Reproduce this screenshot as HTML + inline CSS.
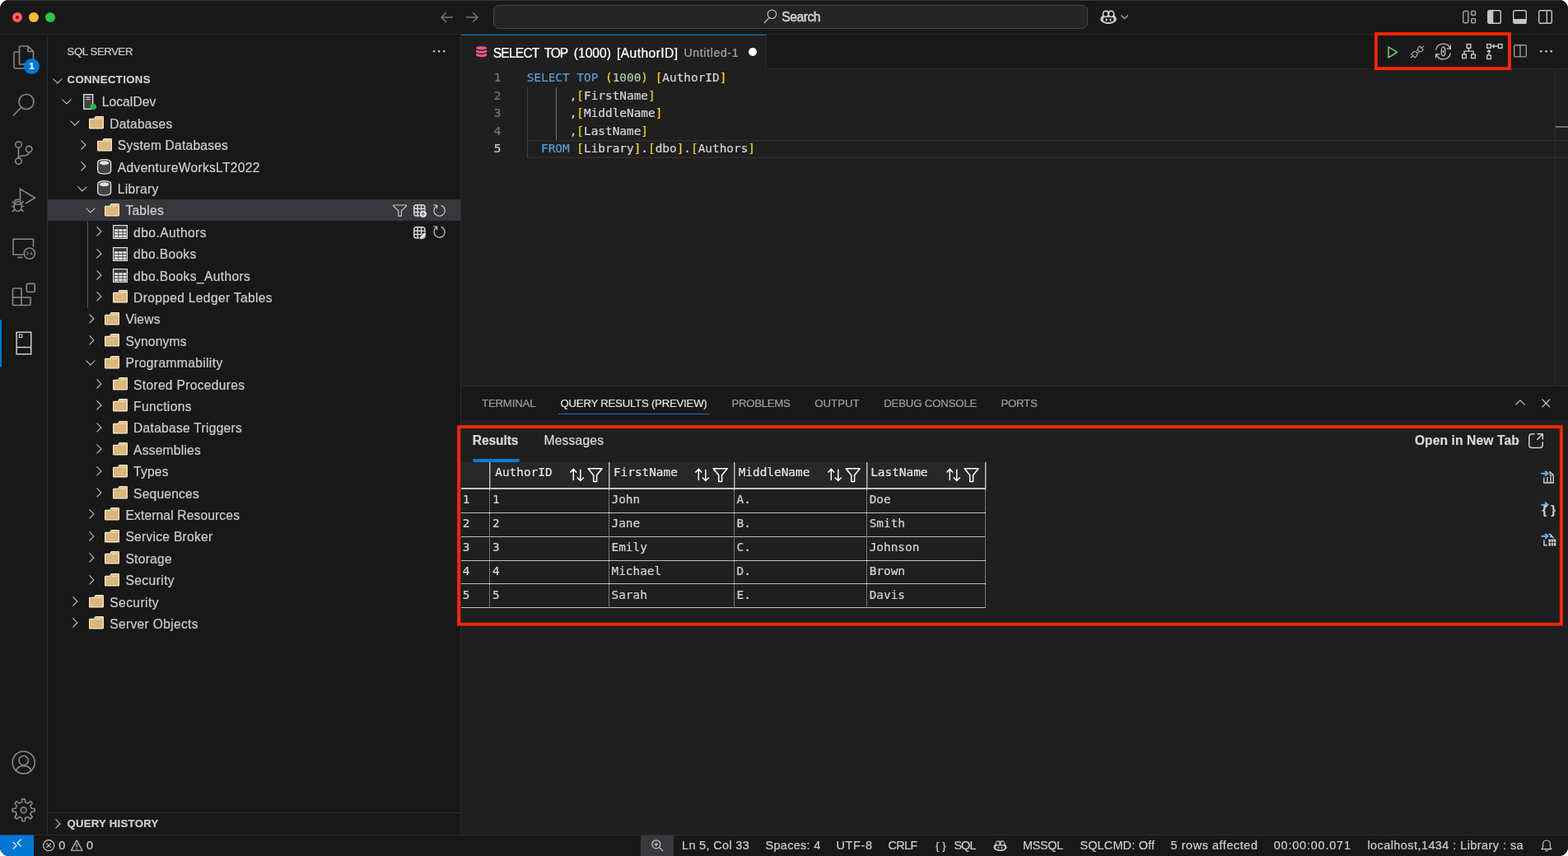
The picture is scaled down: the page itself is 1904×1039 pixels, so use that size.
<!DOCTYPE html>
<html lang="en">
<head>
<meta charset="utf-8">
<title>SQL Server - Visual Studio Code</title>
<style>
*{box-sizing:border-box;margin:0;padding:0}
html,body{width:1904px;height:1039px;overflow:hidden;background:#fff}
body{font-family:"Liberation Sans",sans-serif;color:#ccc;font-size:15.6px}
#win{position:absolute;left:0;top:0;width:1904px;height:1039px;background:#181818;border-radius:11px;overflow:hidden;will-change:transform}
.a{position:absolute}
svg{position:absolute;display:block;overflow:visible}
.tx{position:absolute;white-space:pre;color:#ccc;-webkit-text-stroke:.22px currentColor}
.mono{font-family:"DejaVu Sans Mono","Liberation Mono",monospace}
#titlebar{position:absolute;left:0;top:0;width:1904px;height:42px;background:#181818;border-bottom:1px solid #2b2b2b}
#titlebar:before{content:"";position:absolute;left:0;top:0;width:100%;height:1px;background:#383838}
.tl{position:absolute;top:15px;width:12px;height:12px;border-radius:50%}
#search{position:absolute;left:599px;top:6px;width:722px;height:29px;border:1px solid #464646;background:#252525;border-radius:7px}
#activity{position:absolute;left:0;top:42px;width:58px;height:971px;background:#181818;border-right:1px solid #2b2b2b}
#sidebar{position:absolute;left:58px;top:42px;width:502px;height:971px;background:#181818;border-right:1px solid #2b2b2b}
#editor{position:absolute;left:560px;top:42px;width:1344px;height:426px;background:#1f1f1f}
#tabs{position:absolute;left:0;top:0;width:1344px;height:42px;background:#181818;border-bottom:1px solid #2b2b2b}
#tab{position:absolute;left:0;top:0;width:371px;height:42px;background:#1f1f1f;border-top:1px solid #0078d4;border-right:1px solid #2b2b2b}
.ln,.cl{-webkit-text-stroke:.2px currentColor}
.ln{position:absolute;left:0;width:48px;text-align:right;color:#6e7681;font-size:14.4px;line-height:21.6px;height:21.6px}
.cl{position:absolute;left:80px;color:#d4d4d4;font-size:14.4px;line-height:21.6px;height:21.6px;white-space:pre}
.k{color:#569cd6}.n{color:#b5cea8}.b{color:#ffd700}
#panel{position:absolute;left:560px;top:468px;width:1344px;height:545px;background:#1f1f1f;border-top:1px solid #2b2b2b}
#ptabs{position:absolute;left:0;top:0;width:1344px;height:41px;background:#181818}
#status{position:absolute;left:0;top:1013px;width:1904px;height:26px;background:#181818;border-top:1px solid #2b2b2b}
.red{position:absolute;border:4px solid #ff2600}
.hc{position:absolute;top:0;height:30px;background:#2a2a2a;border-right:1px solid #bdbdbd}
.vd{position:absolute;top:31px;width:0;height:145px;border-left:1px dotted #c8c8c8}
.hl{position:absolute;left:0;height:1px;width:637px;background:#bdbdbd}
.td{position:absolute;font-size:14.4px;line-height:28.8px;height:28.8px;color:#d4d4d4;white-space:pre;-webkit-text-stroke:.2px currentColor}
</style>
</head>
<body>
<div id="win">
<div id="titlebar">
<div class="tl" style="left:15px;background:#ff5f57"><div class="a" style="left:4px;top:4px;width:4px;height:4px;border-radius:50%;background:#990000"></div></div>
<div class="tl" style="left:35px;background:#febc2e"></div>
<div class="tl" style="left:55px;background:#28c840"></div>
<svg style="left:534.5px;top:14px" width="16" height="14" viewBox="0 0 16 14" ><path d="M7 1 L1 7 L7 13 M1 7 H15" fill="none" stroke="#787878" stroke-width="1.35"/></svg>
<svg style="left:565.3px;top:14px" width="16" height="14" viewBox="0 0 16 14" ><path d="M9 1 L15 7 L9 13 M15 7 H1" fill="none" stroke="#787878" stroke-width="1.35"/></svg>
<div id="search"></div>
<svg style="left:927px;top:10.6px" width="17" height="18" viewBox="0 0 17 18" ><circle cx="10.4" cy="6.300" r="5.200" fill="none" stroke="#c4c4c4" stroke-width="1.15"/><path d="M7 10.300 L.9 17" stroke="#c4c4c4" stroke-width="1.15"/></svg>
<div class="tx " style="left:949.3px;top:6px;font-size:15.6px;line-height:29px;height:29px;color:#d0d0d0;letter-spacing:-0.444px;-webkit-text-stroke:.5px #d0d0d0;">Search</div>
<svg style="left:1336px;top:12px" width="20" height="17.5" viewBox="0 0 20 17.5" ><path d="M2.6 7.2 V5 C2.6 2 4.4 .4 7 .4 C8.6 .4 9.6 1 10 2 C10.4 1 11.4 .4 13 .4 C15.6 .4 17.4 2 17.4 5 V7.2 C18.8 8.200 19.700 9.500 19.700 11 C19.700 14.400 15.200 17.100 10 17.100 C4.800 17.100 .3 14.400 .3 11 C.3 9.500 1.200 8.200 2.600 7.200 Z" fill="#d2d2d2"/><rect x="4.200" y="2.300" width="4.800" height="5.400" rx="2.200" fill="#181818"/><rect x="11" y="2.300" width="4.800" height="5.400" rx="2.200" fill="#181818"/><path d="M3.600 9.700 C5.600 9 8 9.500 10 8.800 C12 9.500 14.400 9 16.400 9.700 V12.900 C14.400 14.400 12 15.100 10 15.100 C8 15.100 5.600 14.400 3.600 12.900 Z" fill="#181818"/><rect x="6.700" y="10.500" width="1.800" height="3.200" rx=".7" fill="#d2d2d2"/><rect x="11.500" y="10.500" width="1.800" height="3.200" rx=".7" fill="#d2d2d2"/></svg>
<svg style="left:1361px;top:17.5px" width="9" height="6" viewBox="0 0 9 6" ><path d="M0.3 0.5 L4.5 4.8 L8.7 0.5" fill="none" stroke="#bbb" stroke-width="1.1"/></svg>
<svg style="left:1775.7px;top:11.9px" width="17" height="17.1" viewBox="0 0 17 16" preserveAspectRatio="none"><rect x=".7" y="1.500" width="6.200" height="13.200" rx="1.600" fill="none" stroke="#a4a4a4" stroke-width="1.400"/><rect x="10.600" y="1.500" width="5" height="4.600" rx="1.400" fill="none" stroke="#a4a4a4" stroke-width="1.400"/><rect x="10.600" y="10" width="5" height="4.700" rx="1.400" fill="none" stroke="#a4a4a4" stroke-width="1.400"/></svg>
<svg style="left:1806px;top:11.9px" width="17" height="17.1" viewBox="0 0 17 16" preserveAspectRatio="none"><rect x=".7" y=".7" width="15.6" height="14.6" rx="2" fill="none" stroke="#c4c4c4" stroke-width="1.4"/><path d="M.7 2.5 Q.7 .7 2.7 .7 H7.3 V15.3 H2.7 Q.7 15.3 .7 13.3 Z" fill="#c4c4c4"/></svg>
<svg style="left:1837px;top:11.9px" width="17" height="17.1" viewBox="0 0 17 16" preserveAspectRatio="none"><rect x=".7" y=".7" width="15.6" height="14.6" rx="2" fill="none" stroke="#c4c4c4" stroke-width="1.4"/><path d="M.7 10.2 H16.3 V13.3 Q16.3 15.3 14.3 15.3 H2.7 Q.7 15.3 .7 13.3 Z" fill="#c4c4c4"/></svg>
<svg style="left:1868px;top:11.9px" width="17" height="17.1" viewBox="0 0 17 16" preserveAspectRatio="none"><rect x=".7" y=".7" width="15.6" height="14.6" rx="2" fill="none" stroke="#c4c4c4" stroke-width="1.4"/><path d="M10.3 .7 V15.3" stroke="#c4c4c4" stroke-width="1.4"/></svg>
</div>
<div id="activity">
<svg style="left:15.5px;top:13px" width="26" height="29" viewBox="0 0 26 29" ><path d="M7.5 23 V2.5 Q7.5 1 9 1 H18 L24.5 7.5 V21.5 Q24.5 23 23 23 Z" fill="none" stroke="#868686" stroke-width="1.65" stroke-linejoin="round"/><path d="M18 1 V7.5 H24.5" fill="none" stroke="#868686" stroke-width="1.65"/><path d="M7.5 8 H2.5 Q1 8 1 9.5 V26.5 Q1 28 2.5 28 H15 Q16.5 28 16.5 26.5 V23" fill="none" stroke="#868686" stroke-width="1.65"/></svg>
<div class="a" style="left:29px;top:29.1px;width:19px;height:19px;border-radius:50%;background:#0078d4"></div>
<div class="tx" style="left:29px;top:29.1px;width:19px;height:19px;line-height:19px;text-align:center;font-size:11.5px;font-weight:700;color:#fff">1</div>
<svg style="left:15.2px;top:70.5px" width="27" height="29" viewBox="0 0 27 29" ><circle cx="17" cy="10.5" r="9" fill="none" stroke="#868686" stroke-width="1.65"/><path d="M10.7 17.3 L1 27.5" stroke="#868686" stroke-width="1.65"/></svg>
<svg style="left:0px;top:0px" width="58" height="250" viewBox="0 0 58 250" ><g fill="none" stroke="#868686" stroke-width="1.65"><circle cx="22.5" cy="133.4" r="3.7"/><circle cx="35.2" cy="139" r="3.7"/><circle cx="22.5" cy="153.6" r="3.7"/><path d="M22.5 137.1 V149.9"/><path d="M35.2 142.7 C35.2 147 31 147 28 147 C25 147 22.5 148 22.5 149.9"/></g></svg>
<svg style="left:0px;top:0px" width="58" height="300" viewBox="0 0 58 300" ><g fill="none" stroke="#868686" stroke-width="1.65"><path d="M24.5 200 V187.5 L42.5 198 L31 205"/><ellipse cx="21.7" cy="208.5" rx="4.6" ry="6"/><path d="M17.3 206.2 H26.1"/><path d="M18 202.5 C18 199.5 25.4 199.5 25.4 202.5"/><path d="M17.1 208.5 H14 M26.3 208.5 H29.4 M17.6 204.8 L14.8 202.3 M25.8 204.8 L28.6 202.3 M17.8 212.3 L15 214.8 M25.6 212.3 L28.4 214.8"/></g></svg>
<svg style="left:0px;top:0px" width="58" height="300" viewBox="0 0 58 300" ><g fill="none" stroke="#868686" stroke-width="1.65"><path d="M28 267 H16 V248.2 H40.5 V257.5"/><path d="M21 270.5 H27.5"/><circle cx="35.8" cy="265.6" r="6.6"/><path d="M32.3 263.6 L34.3 265.6 L32.3 267.6 M39.3 263.6 L37.3 265.6 L39.3 267.6" stroke-width="1.1"/></g></svg>
<svg style="left:0px;top:0px" width="58" height="340" viewBox="0 0 58 340" ><g fill="none" stroke="#868686" stroke-width="1.65"><path d="M15.5 309.5 Q15.5 308 17 308 H26 V319 H37 V327 Q37 328.5 35.5 328.5 H17 Q15.5 328.5 15.5 327 Z"/><path d="M15.5 319 H26 V328.5"/><rect x="32.3" y="302.3" width="10" height="10" rx="1.5"/></g></svg>
<div class="a" style="left:0;top:346px;width:2px;height:57px;background:#0078d4"></div>
<svg style="left:0px;top:0px" width="58" height="400" viewBox="0 0 58 400" ><g fill="none" stroke="#d7d7d7" stroke-width="1.4"><rect x="20.1" y="361.2" width="17.6" height="26.6"/><path d="M20.1 379.5 H37.7"/><rect x="23.3" y="363.9" width="3.6" height="3.6" stroke-width="1"/></g></svg>
<svg style="left:0px;top:0px" width="58" height="971" viewBox="0 0 58 971" ><g fill="none" stroke="#868686" stroke-width="1.65"><circle cx="28.7" cy="883.5" r="13.5"/><circle cx="28.7" cy="881" r="5.7"/><path d="M19.6 893.400 C21 889 24.400 887.600 28.700 887.600 C33 887.600 36.400 889 37.800 893.400"/></g></svg>
<svg style="left:0px;top:0px" width="58" height="971" viewBox="0 0 58 971" ><g fill="none" stroke="#868686" stroke-width="1.65" stroke-linejoin="round"><path d="M26.54 931.72 L26.90 927.81 L30.30 927.81 L30.66 931.72 L33.92 933.07 L36.94 930.55 L39.35 932.96 L36.83 935.98 L38.18 939.24 L42.09 939.60 L42.09 943.00 L38.18 943.36 L36.83 946.62 L39.35 949.64 L36.94 952.05 L33.92 949.53 L30.66 950.88 L30.30 954.79 L26.90 954.79 L26.54 950.88 L23.28 949.53 L20.26 952.05 L17.85 949.64 L20.37 946.62 L19.02 943.36 L15.11 943.00 L15.11 939.60 L19.02 939.24 L20.37 935.98 L17.85 932.96 L20.26 930.55 L23.28 933.07 Z"/><circle cx="28.6" cy="941.3" r="3.4"/></g></svg>
</div>
<div id="sidebar">
<div class="tx " style="left:23.5px;top:0px;font-size:13.2px;line-height:42px;height:42px;letter-spacing:-0.396px;">SQL SERVER</div>
<svg style="left:467px;top:19.3px" width="16" height="3" viewBox="0 0 16 3" ><circle cx="2" cy="1.3" r="1.25" fill="#d0d0d0"/><circle cx="8.1" cy="1.3" r="1.25" fill="#d0d0d0"/><circle cx="14.2" cy="1.3" r="1.25" fill="#d0d0d0"/></svg>
<svg style="left:5.8px;top:52.7px" width="12" height="7" viewBox="0 0 12 7" ><path d="M0.4 0.5 L5.9 5.9 L11.4 0.5" fill="none" stroke="#ccc" stroke-width="1.05"/></svg>
<div class="tx " style="left:23.5px;top:42px;font-size:13.2px;line-height:26.4px;height:26.4px;font-weight:700;letter-spacing:0.355px;">CONNECTIONS</div>
<div class="a" style="left:0;top:200px;width:501px;height:26px;background:#37373d"></div>
<div class="a" style="left:48px;top:226.8px;width:1px;height:105.6px;background:#585858"></div>
<svg style="left:16.9px;top:78.0px" width="12" height="7" viewBox="0 0 12 7" ><path d="M0.4 0.5 L5.9 5.9 L11.4 0.5" fill="none" stroke="#ccc" stroke-width="1.05"/></svg>
<svg style="left:43.3px;top:71.9px" width="16" height="19" viewBox="0 0 16 19" ><rect x=".7" y=".7" width="11" height="17.6" fill="#424242" stroke="#e6e6e6" stroke-width="1.3"/><path d="M3.6 4.2 H8.4 M3.6 6.7 H8.4" stroke="#e6e6e6" stroke-width="1.1"/><circle cx="12.2" cy="15.5" r="3.8" fill="#2bb442"/></svg>
<div class="tx " style="left:65.65px;top:69.4px;font-size:15.6px;line-height:26.4px;height:26.4px;letter-spacing:0.105px;">LocalDev</div>
<svg style="left:26.5px;top:104.4px" width="12" height="7" viewBox="0 0 12 7" ><path d="M0.4 0.5 L5.9 5.9 L11.4 0.5" fill="none" stroke="#ccc" stroke-width="1.05"/></svg>
<svg style="left:50.2px;top:99.2px" width="18" height="15.5" viewBox="0 0 18 16" preserveAspectRatio="none"><path d="M.6 4.2 Q.6 3.4 1.4 3.4 H6.6 L7.6 1.2 Q7.9 .6 8.6 .6 H16.6 Q17.4 .6 17.4 1.4 V14.6 Q17.4 15.4 16.6 15.4 H1.4 Q.6 15.4 .6 14.6 Z" fill="#dcb67a" stroke="#f7ead0" stroke-width="1.2" stroke-linejoin="round"/><path d="M8.8 3.3 H15.6" stroke="#f3e3c3" stroke-width="1.2"/></svg>
<div class="tx " style="left:75.25px;top:95.8px;font-size:15.6px;line-height:26.4px;height:26.4px;letter-spacing:0.18px;">Databases</div>
<svg style="left:40.0px;top:127.6px" width="7" height="12" viewBox="0 0 7 12" ><path d="M0.5 0.4 L5.9 5.9 L0.5 11.4" fill="none" stroke="#ccc" stroke-width="1.05"/></svg>
<svg style="left:59.8px;top:125.6px" width="18" height="15.5" viewBox="0 0 18 16" preserveAspectRatio="none"><path d="M.6 4.2 Q.6 3.4 1.4 3.4 H6.6 L7.6 1.2 Q7.9 .6 8.6 .6 H16.6 Q17.4 .6 17.4 1.4 V14.6 Q17.4 15.4 16.6 15.4 H1.4 Q.6 15.4 .6 14.6 Z" fill="#dcb67a" stroke="#f7ead0" stroke-width="1.2" stroke-linejoin="round"/><path d="M8.8 3.3 H15.6" stroke="#f3e3c3" stroke-width="1.2"/></svg>
<div class="tx " style="left:84.85px;top:122.2px;font-size:15.6px;line-height:26.4px;height:26.4px;letter-spacing:0.208px;">System Databases</div>
<svg style="left:40.0px;top:154.0px" width="7" height="12" viewBox="0 0 7 12" ><path d="M0.5 0.4 L5.9 5.9 L0.5 11.4" fill="none" stroke="#ccc" stroke-width="1.05"/></svg>
<svg style="left:60.3px;top:150.8px" width="18" height="19" viewBox="0 0 18 19" ><path d="M.7 4.7 C.7 2.1 4 .7 8.65 .7 C13.3 .7 16.6 2.1 16.6 4.7 V14.1 C16.6 16.7 13.3 18.1 8.65 18.1 C4 18.1 .7 16.7 .7 14.1 Z" fill="#444" stroke="#e6e6e6" stroke-width="1.3"/><ellipse cx="8.65" cy="4.7" rx="5.7" ry="2.5" fill="#e2e2e2"/></svg>
<div class="tx " style="left:84.85px;top:148.6px;font-size:15.6px;line-height:26.4px;height:26.4px;letter-spacing:0.304px;">AdventureWorksLT2022</div>
<svg style="left:36.1px;top:183.6px" width="12" height="7" viewBox="0 0 12 7" ><path d="M0.4 0.5 L5.9 5.9 L11.4 0.5" fill="none" stroke="#ccc" stroke-width="1.05"/></svg>
<svg style="left:60.3px;top:177.2px" width="18" height="19" viewBox="0 0 18 19" ><path d="M.7 4.7 C.7 2.1 4 .7 8.65 .7 C13.3 .7 16.6 2.1 16.6 4.7 V14.1 C16.6 16.7 13.3 18.1 8.65 18.1 C4 18.1 .7 16.7 .7 14.1 Z" fill="#444" stroke="#e6e6e6" stroke-width="1.3"/><ellipse cx="8.65" cy="4.7" rx="5.7" ry="2.5" fill="#e2e2e2"/></svg>
<div class="tx " style="left:84.85px;top:175.0px;font-size:15.6px;line-height:26.4px;height:26.4px;letter-spacing:0.305px;">Library</div>
<svg style="left:45.7px;top:210.0px" width="12" height="7" viewBox="0 0 12 7" ><path d="M0.4 0.5 L5.9 5.9 L11.4 0.5" fill="none" stroke="#ccc" stroke-width="1.05"/></svg>
<svg style="left:69.4px;top:204.8px" width="18" height="15.5" viewBox="0 0 18 16" preserveAspectRatio="none"><path d="M.6 4.2 Q.6 3.4 1.4 3.4 H6.6 L7.6 1.2 Q7.9 .6 8.6 .6 H16.6 Q17.4 .6 17.4 1.4 V14.6 Q17.4 15.4 16.6 15.4 H1.4 Q.6 15.4 .6 14.6 Z" fill="#dcb67a" stroke="#f7ead0" stroke-width="1.2" stroke-linejoin="round"/><path d="M8.8 3.3 H15.6" stroke="#f3e3c3" stroke-width="1.2"/></svg>
<div class="tx " style="left:94.45px;top:201.4px;font-size:15.6px;line-height:26.4px;height:26.4px;letter-spacing:0.234px;">Tables</div>
<svg style="left:59.2px;top:233.2px" width="7" height="12" viewBox="0 0 7 12" ><path d="M0.5 0.4 L5.9 5.9 L0.5 11.4" fill="none" stroke="#ccc" stroke-width="1.05"/></svg>
<svg style="left:79.0px;top:231.1px" width="18" height="17" viewBox="0 0 18 17" ><rect x=".6" y=".6" width="16.8" height="15.8" fill="#3a3a3a" stroke="#e0e0e0" stroke-width="1.2"/><g fill="#e6e6e6"><rect x="2.1" y="5.2" width="4.4" height="2.7"/><rect x="7.3" y="5.2" width="4.3" height="2.7"/><rect x="12.4" y="5.2" width="3.9" height="2.7"/><rect x="2.1" y="8.9" width="4.4" height="2.5"/><rect x="7.3" y="8.9" width="4.3" height="2.5"/><rect x="12.4" y="8.9" width="3.9" height="2.5"/><rect x="2.1" y="12.4" width="4.4" height="2.8"/><rect x="7.3" y="12.4" width="4.3" height="2.8"/><rect x="12.4" y="12.4" width="3.9" height="2.8"/></g></svg>
<div class="tx " style="left:104.05px;top:227.8px;font-size:15.6px;line-height:26.4px;height:26.4px;letter-spacing:0.441px;">dbo.Authors</div>
<svg style="left:59.2px;top:259.6px" width="7" height="12" viewBox="0 0 7 12" ><path d="M0.5 0.4 L5.9 5.9 L0.5 11.4" fill="none" stroke="#ccc" stroke-width="1.05"/></svg>
<svg style="left:79.0px;top:257.5px" width="18" height="17" viewBox="0 0 18 17" ><rect x=".6" y=".6" width="16.8" height="15.8" fill="#3a3a3a" stroke="#e0e0e0" stroke-width="1.2"/><g fill="#e6e6e6"><rect x="2.1" y="5.2" width="4.4" height="2.7"/><rect x="7.3" y="5.2" width="4.3" height="2.7"/><rect x="12.4" y="5.2" width="3.9" height="2.7"/><rect x="2.1" y="8.9" width="4.4" height="2.5"/><rect x="7.3" y="8.9" width="4.3" height="2.5"/><rect x="12.4" y="8.9" width="3.9" height="2.5"/><rect x="2.1" y="12.4" width="4.4" height="2.8"/><rect x="7.3" y="12.4" width="4.3" height="2.8"/><rect x="12.4" y="12.4" width="3.9" height="2.8"/></g></svg>
<div class="tx " style="left:104.05px;top:254.2px;font-size:15.6px;line-height:26.4px;height:26.4px;letter-spacing:0.318px;">dbo.Books</div>
<svg style="left:59.2px;top:286.0px" width="7" height="12" viewBox="0 0 7 12" ><path d="M0.5 0.4 L5.9 5.9 L0.5 11.4" fill="none" stroke="#ccc" stroke-width="1.05"/></svg>
<svg style="left:79.0px;top:283.9px" width="18" height="17" viewBox="0 0 18 17" ><rect x=".6" y=".6" width="16.8" height="15.8" fill="#3a3a3a" stroke="#e0e0e0" stroke-width="1.2"/><g fill="#e6e6e6"><rect x="2.1" y="5.2" width="4.4" height="2.7"/><rect x="7.3" y="5.2" width="4.3" height="2.7"/><rect x="12.4" y="5.2" width="3.9" height="2.7"/><rect x="2.1" y="8.9" width="4.4" height="2.5"/><rect x="7.3" y="8.9" width="4.3" height="2.5"/><rect x="12.4" y="8.9" width="3.9" height="2.5"/><rect x="2.1" y="12.4" width="4.4" height="2.8"/><rect x="7.3" y="12.4" width="4.3" height="2.8"/><rect x="12.4" y="12.4" width="3.9" height="2.8"/></g></svg>
<div class="tx " style="left:104.05px;top:280.6px;font-size:15.6px;line-height:26.4px;height:26.4px;letter-spacing:0.353px;">dbo.Books_Authors</div>
<svg style="left:59.2px;top:312.4px" width="7" height="12" viewBox="0 0 7 12" ><path d="M0.5 0.4 L5.9 5.9 L0.5 11.4" fill="none" stroke="#ccc" stroke-width="1.05"/></svg>
<svg style="left:79.0px;top:310.4px" width="18" height="15.5" viewBox="0 0 18 16" preserveAspectRatio="none"><path d="M.6 4.2 Q.6 3.4 1.4 3.4 H6.6 L7.6 1.2 Q7.9 .6 8.6 .6 H16.6 Q17.4 .6 17.4 1.4 V14.6 Q17.4 15.4 16.6 15.4 H1.4 Q.6 15.4 .6 14.6 Z" fill="#dcb67a" stroke="#f7ead0" stroke-width="1.2" stroke-linejoin="round"/><path d="M8.8 3.3 H15.6" stroke="#f3e3c3" stroke-width="1.2"/></svg>
<div class="tx " style="left:104.05px;top:307.0px;font-size:15.6px;line-height:26.4px;height:26.4px;letter-spacing:0.333px;">Dropped Ledger Tables</div>
<svg style="left:49.6px;top:338.8px" width="7" height="12" viewBox="0 0 7 12" ><path d="M0.5 0.4 L5.9 5.9 L0.5 11.4" fill="none" stroke="#ccc" stroke-width="1.05"/></svg>
<svg style="left:69.4px;top:336.8px" width="18" height="15.5" viewBox="0 0 18 16" preserveAspectRatio="none"><path d="M.6 4.2 Q.6 3.4 1.4 3.4 H6.6 L7.6 1.2 Q7.9 .6 8.6 .6 H16.6 Q17.4 .6 17.4 1.4 V14.6 Q17.4 15.4 16.6 15.4 H1.4 Q.6 15.4 .6 14.6 Z" fill="#dcb67a" stroke="#f7ead0" stroke-width="1.2" stroke-linejoin="round"/><path d="M8.8 3.3 H15.6" stroke="#f3e3c3" stroke-width="1.2"/></svg>
<div class="tx " style="left:94.45px;top:333.4px;font-size:15.6px;line-height:26.4px;height:26.4px;letter-spacing:0.168px;">Views</div>
<svg style="left:49.6px;top:365.2px" width="7" height="12" viewBox="0 0 7 12" ><path d="M0.5 0.4 L5.9 5.9 L0.5 11.4" fill="none" stroke="#ccc" stroke-width="1.05"/></svg>
<svg style="left:69.4px;top:363.2px" width="18" height="15.5" viewBox="0 0 18 16" preserveAspectRatio="none"><path d="M.6 4.2 Q.6 3.4 1.4 3.4 H6.6 L7.6 1.2 Q7.9 .6 8.6 .6 H16.6 Q17.4 .6 17.4 1.4 V14.6 Q17.4 15.4 16.6 15.4 H1.4 Q.6 15.4 .6 14.6 Z" fill="#dcb67a" stroke="#f7ead0" stroke-width="1.2" stroke-linejoin="round"/><path d="M8.8 3.3 H15.6" stroke="#f3e3c3" stroke-width="1.2"/></svg>
<div class="tx " style="left:94.45px;top:359.8px;font-size:15.6px;line-height:26.4px;height:26.4px;letter-spacing:0.17px;">Synonyms</div>
<svg style="left:45.7px;top:394.8px" width="12" height="7" viewBox="0 0 12 7" ><path d="M0.4 0.5 L5.9 5.9 L11.4 0.5" fill="none" stroke="#ccc" stroke-width="1.05"/></svg>
<svg style="left:69.4px;top:389.6px" width="18" height="15.5" viewBox="0 0 18 16" preserveAspectRatio="none"><path d="M.6 4.2 Q.6 3.4 1.4 3.4 H6.6 L7.6 1.2 Q7.9 .6 8.6 .6 H16.6 Q17.4 .6 17.4 1.4 V14.6 Q17.4 15.4 16.6 15.4 H1.4 Q.6 15.4 .6 14.6 Z" fill="#dcb67a" stroke="#f7ead0" stroke-width="1.2" stroke-linejoin="round"/><path d="M8.8 3.3 H15.6" stroke="#f3e3c3" stroke-width="1.2"/></svg>
<div class="tx " style="left:94.45px;top:386.2px;font-size:15.6px;line-height:26.4px;height:26.4px;letter-spacing:0.364px;">Programmability</div>
<svg style="left:59.2px;top:418.0px" width="7" height="12" viewBox="0 0 7 12" ><path d="M0.5 0.4 L5.9 5.9 L0.5 11.4" fill="none" stroke="#ccc" stroke-width="1.05"/></svg>
<svg style="left:79.0px;top:416.0px" width="18" height="15.5" viewBox="0 0 18 16" preserveAspectRatio="none"><path d="M.6 4.2 Q.6 3.4 1.4 3.4 H6.6 L7.6 1.2 Q7.9 .6 8.6 .6 H16.6 Q17.4 .6 17.4 1.4 V14.6 Q17.4 15.4 16.6 15.4 H1.4 Q.6 15.4 .6 14.6 Z" fill="#dcb67a" stroke="#f7ead0" stroke-width="1.2" stroke-linejoin="round"/><path d="M8.8 3.3 H15.6" stroke="#f3e3c3" stroke-width="1.2"/></svg>
<div class="tx " style="left:104.05px;top:412.6px;font-size:15.6px;line-height:26.4px;height:26.4px;letter-spacing:0.311px;">Stored Procedures</div>
<svg style="left:59.2px;top:444.4px" width="7" height="12" viewBox="0 0 7 12" ><path d="M0.5 0.4 L5.9 5.9 L0.5 11.4" fill="none" stroke="#ccc" stroke-width="1.05"/></svg>
<svg style="left:79.0px;top:442.4px" width="18" height="15.5" viewBox="0 0 18 16" preserveAspectRatio="none"><path d="M.6 4.2 Q.6 3.4 1.4 3.4 H6.6 L7.6 1.2 Q7.9 .6 8.6 .6 H16.6 Q17.4 .6 17.4 1.4 V14.6 Q17.4 15.4 16.6 15.4 H1.4 Q.6 15.4 .6 14.6 Z" fill="#dcb67a" stroke="#f7ead0" stroke-width="1.2" stroke-linejoin="round"/><path d="M8.8 3.3 H15.6" stroke="#f3e3c3" stroke-width="1.2"/></svg>
<div class="tx " style="left:104.05px;top:439.0px;font-size:15.6px;line-height:26.4px;height:26.4px;letter-spacing:0.361px;">Functions</div>
<svg style="left:59.2px;top:470.8px" width="7" height="12" viewBox="0 0 7 12" ><path d="M0.5 0.4 L5.9 5.9 L0.5 11.4" fill="none" stroke="#ccc" stroke-width="1.05"/></svg>
<svg style="left:79.0px;top:468.8px" width="18" height="15.5" viewBox="0 0 18 16" preserveAspectRatio="none"><path d="M.6 4.2 Q.6 3.4 1.4 3.4 H6.6 L7.6 1.2 Q7.9 .6 8.6 .6 H16.6 Q17.4 .6 17.4 1.4 V14.6 Q17.4 15.4 16.6 15.4 H1.4 Q.6 15.4 .6 14.6 Z" fill="#dcb67a" stroke="#f7ead0" stroke-width="1.2" stroke-linejoin="round"/><path d="M8.8 3.3 H15.6" stroke="#f3e3c3" stroke-width="1.2"/></svg>
<div class="tx " style="left:104.05px;top:465.4px;font-size:15.6px;line-height:26.4px;height:26.4px;letter-spacing:0.271px;">Database Triggers</div>
<svg style="left:59.2px;top:497.2px" width="7" height="12" viewBox="0 0 7 12" ><path d="M0.5 0.4 L5.9 5.9 L0.5 11.4" fill="none" stroke="#ccc" stroke-width="1.05"/></svg>
<svg style="left:79.0px;top:495.2px" width="18" height="15.5" viewBox="0 0 18 16" preserveAspectRatio="none"><path d="M.6 4.2 Q.6 3.4 1.4 3.4 H6.6 L7.6 1.2 Q7.9 .6 8.6 .6 H16.6 Q17.4 .6 17.4 1.4 V14.6 Q17.4 15.4 16.6 15.4 H1.4 Q.6 15.4 .6 14.6 Z" fill="#dcb67a" stroke="#f7ead0" stroke-width="1.2" stroke-linejoin="round"/><path d="M8.8 3.3 H15.6" stroke="#f3e3c3" stroke-width="1.2"/></svg>
<div class="tx " style="left:104.05px;top:491.8px;font-size:15.6px;line-height:26.4px;height:26.4px;letter-spacing:0.224px;">Assemblies</div>
<svg style="left:59.2px;top:523.6px" width="7" height="12" viewBox="0 0 7 12" ><path d="M0.5 0.4 L5.9 5.9 L0.5 11.4" fill="none" stroke="#ccc" stroke-width="1.05"/></svg>
<svg style="left:79.0px;top:521.6px" width="18" height="15.5" viewBox="0 0 18 16" preserveAspectRatio="none"><path d="M.6 4.2 Q.6 3.4 1.4 3.4 H6.6 L7.6 1.2 Q7.9 .6 8.6 .6 H16.6 Q17.4 .6 17.4 1.4 V14.6 Q17.4 15.4 16.6 15.4 H1.4 Q.6 15.4 .6 14.6 Z" fill="#dcb67a" stroke="#f7ead0" stroke-width="1.2" stroke-linejoin="round"/><path d="M8.8 3.3 H15.6" stroke="#f3e3c3" stroke-width="1.2"/></svg>
<div class="tx " style="left:104.05px;top:518.2px;font-size:15.6px;line-height:26.4px;height:26.4px;letter-spacing:0.223px;">Types</div>
<svg style="left:59.2px;top:550.0px" width="7" height="12" viewBox="0 0 7 12" ><path d="M0.5 0.4 L5.9 5.9 L0.5 11.4" fill="none" stroke="#ccc" stroke-width="1.05"/></svg>
<svg style="left:79.0px;top:548.0px" width="18" height="15.5" viewBox="0 0 18 16" preserveAspectRatio="none"><path d="M.6 4.2 Q.6 3.4 1.4 3.4 H6.6 L7.6 1.2 Q7.9 .6 8.6 .6 H16.6 Q17.4 .6 17.4 1.4 V14.6 Q17.4 15.4 16.6 15.4 H1.4 Q.6 15.4 .6 14.6 Z" fill="#dcb67a" stroke="#f7ead0" stroke-width="1.2" stroke-linejoin="round"/><path d="M8.8 3.3 H15.6" stroke="#f3e3c3" stroke-width="1.2"/></svg>
<div class="tx " style="left:104.05px;top:544.6px;font-size:15.6px;line-height:26.4px;height:26.4px;letter-spacing:0.215px;">Sequences</div>
<svg style="left:49.6px;top:576.4px" width="7" height="12" viewBox="0 0 7 12" ><path d="M0.5 0.4 L5.9 5.9 L0.5 11.4" fill="none" stroke="#ccc" stroke-width="1.05"/></svg>
<svg style="left:69.4px;top:574.4px" width="18" height="15.5" viewBox="0 0 18 16" preserveAspectRatio="none"><path d="M.6 4.2 Q.6 3.4 1.4 3.4 H6.6 L7.6 1.2 Q7.9 .6 8.6 .6 H16.6 Q17.4 .6 17.4 1.4 V14.6 Q17.4 15.4 16.6 15.4 H1.4 Q.6 15.4 .6 14.6 Z" fill="#dcb67a" stroke="#f7ead0" stroke-width="1.2" stroke-linejoin="round"/><path d="M8.8 3.3 H15.6" stroke="#f3e3c3" stroke-width="1.2"/></svg>
<div class="tx " style="left:94.45px;top:571.0px;font-size:15.6px;line-height:26.4px;height:26.4px;letter-spacing:0.142px;">External Resources</div>
<svg style="left:49.6px;top:602.8px" width="7" height="12" viewBox="0 0 7 12" ><path d="M0.5 0.4 L5.9 5.9 L0.5 11.4" fill="none" stroke="#ccc" stroke-width="1.05"/></svg>
<svg style="left:69.4px;top:600.8px" width="18" height="15.5" viewBox="0 0 18 16" preserveAspectRatio="none"><path d="M.6 4.2 Q.6 3.4 1.4 3.4 H6.6 L7.6 1.2 Q7.9 .6 8.6 .6 H16.6 Q17.4 .6 17.4 1.4 V14.6 Q17.4 15.4 16.6 15.4 H1.4 Q.6 15.4 .6 14.6 Z" fill="#dcb67a" stroke="#f7ead0" stroke-width="1.2" stroke-linejoin="round"/><path d="M8.8 3.3 H15.6" stroke="#f3e3c3" stroke-width="1.2"/></svg>
<div class="tx " style="left:94.45px;top:597.4px;font-size:15.6px;line-height:26.4px;height:26.4px;letter-spacing:0.268px;">Service Broker</div>
<svg style="left:49.6px;top:629.2px" width="7" height="12" viewBox="0 0 7 12" ><path d="M0.5 0.4 L5.9 5.9 L0.5 11.4" fill="none" stroke="#ccc" stroke-width="1.05"/></svg>
<svg style="left:69.4px;top:627.2px" width="18" height="15.5" viewBox="0 0 18 16" preserveAspectRatio="none"><path d="M.6 4.2 Q.6 3.4 1.4 3.4 H6.6 L7.6 1.2 Q7.9 .6 8.6 .6 H16.6 Q17.4 .6 17.4 1.4 V14.6 Q17.4 15.4 16.6 15.4 H1.4 Q.6 15.4 .6 14.6 Z" fill="#dcb67a" stroke="#f7ead0" stroke-width="1.2" stroke-linejoin="round"/><path d="M8.8 3.3 H15.6" stroke="#f3e3c3" stroke-width="1.2"/></svg>
<div class="tx " style="left:94.45px;top:623.8px;font-size:15.6px;line-height:26.4px;height:26.4px;letter-spacing:0.271px;">Storage</div>
<svg style="left:49.6px;top:655.6px" width="7" height="12" viewBox="0 0 7 12" ><path d="M0.5 0.4 L5.9 5.9 L0.5 11.4" fill="none" stroke="#ccc" stroke-width="1.05"/></svg>
<svg style="left:69.4px;top:653.6px" width="18" height="15.5" viewBox="0 0 18 16" preserveAspectRatio="none"><path d="M.6 4.2 Q.6 3.4 1.4 3.4 H6.6 L7.6 1.2 Q7.9 .6 8.6 .6 H16.6 Q17.4 .6 17.4 1.4 V14.6 Q17.4 15.4 16.6 15.4 H1.4 Q.6 15.4 .6 14.6 Z" fill="#dcb67a" stroke="#f7ead0" stroke-width="1.2" stroke-linejoin="round"/><path d="M8.8 3.3 H15.6" stroke="#f3e3c3" stroke-width="1.2"/></svg>
<div class="tx " style="left:94.45px;top:650.2px;font-size:15.6px;line-height:26.4px;height:26.4px;letter-spacing:0.415px;">Security</div>
<svg style="left:30.4px;top:682.0px" width="7" height="12" viewBox="0 0 7 12" ><path d="M0.5 0.4 L5.9 5.9 L0.5 11.4" fill="none" stroke="#ccc" stroke-width="1.05"/></svg>
<svg style="left:50.2px;top:680.0px" width="18" height="15.5" viewBox="0 0 18 16" preserveAspectRatio="none"><path d="M.6 4.2 Q.6 3.4 1.4 3.4 H6.6 L7.6 1.2 Q7.9 .6 8.6 .6 H16.6 Q17.4 .6 17.4 1.4 V14.6 Q17.4 15.4 16.6 15.4 H1.4 Q.6 15.4 .6 14.6 Z" fill="#dcb67a" stroke="#f7ead0" stroke-width="1.2" stroke-linejoin="round"/><path d="M8.8 3.3 H15.6" stroke="#f3e3c3" stroke-width="1.2"/></svg>
<div class="tx " style="left:75.25px;top:676.6px;font-size:15.6px;line-height:26.4px;height:26.4px;letter-spacing:0.415px;">Security</div>
<svg style="left:30.4px;top:708.4px" width="7" height="12" viewBox="0 0 7 12" ><path d="M0.5 0.4 L5.9 5.9 L0.5 11.4" fill="none" stroke="#ccc" stroke-width="1.05"/></svg>
<svg style="left:50.2px;top:706.4px" width="18" height="15.5" viewBox="0 0 18 16" preserveAspectRatio="none"><path d="M.6 4.2 Q.6 3.4 1.4 3.4 H6.6 L7.6 1.2 Q7.9 .6 8.6 .6 H16.6 Q17.4 .6 17.4 1.4 V14.6 Q17.4 15.4 16.6 15.4 H1.4 Q.6 15.4 .6 14.6 Z" fill="#dcb67a" stroke="#f7ead0" stroke-width="1.2" stroke-linejoin="round"/><path d="M8.8 3.3 H15.6" stroke="#f3e3c3" stroke-width="1.2"/></svg>
<div class="tx " style="left:75.25px;top:703.0px;font-size:15.6px;line-height:26.4px;height:26.4px;letter-spacing:0.316px;">Server Objects</div>
<svg style="left:417.6px;top:203.6px" width="19.2" height="19.2" viewBox="0 0 16 16" ><path d="M15 2v1.67l-5 4.759V14H6V8.429l-5-4.76V2h14zM7 8v5h2V8l5-4.76V3H2v.24L7 8z" fill="#c8c8c8"/></svg>
<svg style="left:444.2px;top:206.1px" width="15" height="15" viewBox="0 0 15 15" ><rect x=".75" y=".75" width="13.2" height="13.3" rx="3" fill="none" stroke="#d8d8d8" stroke-width="1.5"/><path d="M.75 5.2 H13.95 M.75 9.6 H13.95 M5.1 .75 V14.05 M9.6 .75 V14.05" stroke="#d8d8d8" stroke-width="1.5"/><circle cx="11.8" cy="11.7" r="4.6" fill="#e4e4e4" stroke="#37373d" stroke-width=".8"/><path d="M9.4 11.7 H14.2 M11.8 9.3 V14.1" stroke="#55555c" stroke-width="1"/></svg>
<svg style="left:465.5px;top:203.6px" width="19.2" height="19.2" viewBox="0 0 16 16" ><path d="M4.681 3H2V2h3.5l.5.5V6H5V4a5 5 0 1 0 4.53-.761l.302-.953A6 6 0 1 1 4.681 3z" fill="#c8c8c8"/></svg>
<svg style="left:444.2px;top:232.5px" width="15" height="15" viewBox="0 0 15 15" ><rect x=".75" y=".75" width="13.2" height="13.3" rx="3" fill="none" stroke="#d8d8d8" stroke-width="1.5"/><path d="M.75 5.2 H13.95 M.75 9.6 H13.95 M5.1 .75 V14.05 M9.6 .75 V14.05" stroke="#d8d8d8" stroke-width="1.5"/><path d="M7.2 15.2 L8.6 15.9 L15.9 9.2 L13.4 6.6 L6.9 13 Z" fill="#181818"/><path d="M8.3 14.6 L14.4 8.4" stroke="#f2f2f2" stroke-width="3" stroke-linecap="butt"/></svg>
<svg style="left:465.5px;top:230.0px" width="19.2" height="19.2" viewBox="0 0 16 16" ><path d="M4.681 3H2V2h3.5l.5.5V6H5V4a5 5 0 1 0 4.53-.761l.302-.953A6 6 0 1 1 4.681 3z" fill="#c8c8c8"/></svg>
<div class="a" style="left:0;top:944px;width:501px;height:1px;background:#2b2b2b"></div>
<svg style="left:9px;top:952px" width="7" height="12" viewBox="0 0 7 12" ><path d="M0.5 0.4 L5.9 5.9 L0.5 11.4" fill="none" stroke="#ccc" stroke-width="1.05"/></svg>
<div class="tx " style="left:23.5px;top:945px;font-size:13.2px;line-height:26.4px;height:26.4px;font-weight:700;letter-spacing:0.251px;">QUERY HISTORY</div>
</div>
<div id="editor">
<div id="tabs">
<div id="tab">
<svg style="left:17.8px;top:12.6px" width="13.3" height="13.4" viewBox="0 0 13.3 13.4" ><g fill="#f5548a"><path d="M.2 2.4 C.2 -.3 13.1 -.3 13.1 2.4 V2.6 C13.1 5 .2 5 .2 2.6 Z"/><path d="M.2 3.9 C.2 6.300 13.100 6.300 13.100 3.900 V6.900 C13.100 9.300 .2 9.300 .2 6.900 Z"/><path d="M.2 8.200 C.2 10.600 13.100 10.600 13.100 8.200 V11.100 C13.100 14 .2 14 .2 11.100 Z"/></g></svg>
<div class="tx " style="left:38.7px;top:0.7px;font-size:15.6px;line-height:42px;height:42px;color:#fff;letter-spacing:-0.794px;">SELECT</div>
<div class="tx " style="left:100.8px;top:0.7px;font-size:15.6px;line-height:42px;height:42px;color:#fff;letter-spacing:-1.241px;">TOP</div>
<div class="tx " style="left:136.7px;top:0.7px;font-size:15.6px;line-height:42px;height:42px;color:#fff;letter-spacing:0.044px;">(1000)</div>
<div class="tx " style="left:189.0px;top:0.7px;font-size:15.6px;line-height:42px;height:42px;color:#fff;letter-spacing:0.433px;">[AuthorID]</div>
<div class="tx " style="left:270.5px;top:0px;font-size:14px;line-height:42px;height:42px;color:#a6a6a6;letter-spacing:0.675px;">Untitled-1</div>
<div class="a" style="left:349.2px;top:15.4px;width:9.8px;height:9.8px;border-radius:50%;background:#fff"></div>
</div>
<svg style="left:1124.5px;top:13.5px" width="13" height="15" viewBox="0 0 13 15" ><path d="M1 1 L11.6 7.4 L1 13.8 Z" fill="none" stroke="#89d185" stroke-width="1.4" stroke-linejoin="round"/></svg>
<svg style="left:1152px;top:11.5px" width="18" height="18" viewBox="0 0 18 18" ><g fill="none" stroke="#b4b4b4" stroke-width="1.1" transform="rotate(-42 9 9)"><path d="M-1.5 9 H2"/><path d="M2 6 V12 H5 Q8 12 8 9 Q8 6 5 6 Z"/><path d="M9.2 7.4 H11 M9.2 10.6 H11"/><path d="M16 6 V12 H14 Q11 12 11 9 Q11 6 14 6 Z"/><path d="M16 9 H19.5"/></g></svg>
<svg style="left:1182px;top:10.3px" width="21" height="21" viewBox="0 0 21 21" ><g fill="none" stroke="#d0d0d0" stroke-width="1.2"><path d="M1.6 8.6 A9 9 0 0 1 18.8 6.800"/><path d="M19.400 2.400 V7.200 H14.600"/><path d="M19.400 12.400 A9 9 0 0 1 2.200 14.200"/><path d="M1.600 18.600 V13.800 H6.400"/><ellipse cx="10.500" cy="10.500" rx="2.300" ry="5.300"/><path d="M10.500 8.800 V12.200" stroke-width="1.300"/></g></svg>
<svg style="left:1215px;top:11px" width="18" height="19" viewBox="0 0 18 19" ><g fill="none" stroke="#d0d0d0" stroke-width="1.3"><rect x="6.2" y=".7" width="4.6" height="4.6"/><rect x=".7" y="13" width="4.6" height="4.6"/><rect x="11.7" y="13" width="4.6" height="4.6"/><path d="M8.5 5.3 V9.2 M3 13 V9.2 H14 V13"/></g></svg>
<svg style="left:1244.5px;top:10.5px" width="20" height="20" viewBox="0 0 20 20" ><g fill="none" stroke="#d0d0d0" stroke-width="1.3"><rect x=".7" y=".7" width="4.6" height="4.6"/><rect x="14.4" y=".7" width="4.6" height="4.6"/><rect x=".7" y="14" width="4.6" height="4.6"/><path d="M14.4 3 H7.2 M9.4 .9 L7.2 3 L9.4 5.1"/><path d="M3 14 V8 M.9 10 L3 8 L5.1 10"/></g></svg>
<svg style="left:1278px;top:12px" width="16" height="16" viewBox="0 0 16 16" ><rect x=".7" y=".7" width="14.6" height="14.2" rx="1.6" fill="none" stroke="#9a9a9a" stroke-width="1.4"/><path d="M8 .7 V14.9" stroke="#9a9a9a" stroke-width="1.4"/></svg>
<svg style="left:1309.5px;top:19.3px" width="16" height="3" viewBox="0 0 16 3" ><circle cx="1.3" cy="1.2" r="1.25" fill="#d0d0d0"/><circle cx="7.5" cy="1.2" r="1.25" fill="#d0d0d0"/><circle cx="13.7" cy="1.2" r="1.25" fill="#d0d0d0"/></svg>
</div>
<div class="a" style="left:81px;top:128px;width:1263px;height:1px;background:#2f2f2f"></div><div class="a" style="left:81px;top:129px;width:1263px;height:1px;background:#252525"></div>
<div class="a" style="left:81px;top:148px;width:1263px;height:1px;background:#262626"></div><div class="a" style="left:81px;top:149px;width:1263px;height:1px;background:#2f2f2f"></div>
<div class="a" style="left:80px;top:64px;width:1px;height:86px;background:#404040"></div>
<div class="a" style="left:115px;top:64px;width:1px;height:64px;background:#6e6e6e"></div>
<div class="ln mono" style="top:42.0px;width:48.4px;color:#6e7681">1</div>
<div class="cl mono" style="top:42.0px;left:79.7px"><span class="k">SELECT</span> <span class="k">TOP</span> <span class="b">(</span><span class="n">1000</span><span class="b">)</span> <span class="b">[</span>AuthorID<span class="b">]</span></div>
<div class="ln mono" style="top:63.6px;width:48.4px;color:#6e7681">2</div>
<div class="cl mono" style="top:63.6px;left:79.7px">      ,<span class="b">[</span>FirstName<span class="b">]</span></div>
<div class="ln mono" style="top:85.2px;width:48.4px;color:#6e7681">3</div>
<div class="cl mono" style="top:85.2px;left:79.7px">      ,<span class="b">[</span>MiddleName<span class="b">]</span></div>
<div class="ln mono" style="top:106.8px;width:48.4px;color:#6e7681">4</div>
<div class="cl mono" style="top:106.8px;left:79.7px">      ,<span class="b">[</span>LastName<span class="b">]</span></div>
<div class="ln mono" style="top:128.4px;width:48.4px;color:#ccc">5</div>
<div class="cl mono" style="top:128.4px;left:79.7px">  <span class="k">FROM</span> <span class="b">[</span>Library<span class="b">]</span>.<span class="b">[</span>dbo<span class="b">]</span>.<span class="b">[</span>Authors<span class="b">]</span></div>
<div class="a" style="left:1328px;top:42px;width:1px;height:384px;background:#2b2b2b"></div>
<div class="a" style="left:1329px;top:111px;width:15px;height:2px;background:#6c6c6c"></div>
</div>
<div id="panel">
<div id="ptabs">
<div class="tx " style="left:25px;top:0px;font-size:13.2px;line-height:41.6px;height:41.6px;color:#9d9d9d;letter-spacing:-0.17px;">TERMINAL</div>
<div class="tx " style="left:120.5px;top:0px;font-size:13.2px;line-height:41.6px;height:41.6px;color:#e0e0e0;letter-spacing:-0.225px;">QUERY RESULTS (PREVIEW)</div>
<div class="tx " style="left:328.5px;top:0px;font-size:13.2px;line-height:41.6px;height:41.6px;color:#9d9d9d;letter-spacing:-0.292px;">PROBLEMS</div>
<div class="tx " style="left:429.29999999999995px;top:0px;font-size:13.2px;line-height:41.6px;height:41.6px;color:#9d9d9d;letter-spacing:0.016px;">OUTPUT</div>
<div class="tx " style="left:513.2px;top:0px;font-size:13.2px;line-height:41.6px;height:41.6px;color:#9d9d9d;letter-spacing:-0.155px;">DEBUG CONSOLE</div>
<div class="tx " style="left:655.4000000000001px;top:0px;font-size:13.2px;line-height:41.6px;height:41.6px;color:#9d9d9d;letter-spacing:-0.226px;">PORTS</div>
<div class="a" style="left:118px;top:33px;width:184px;height:1.2px;background:#0078d4"></div>
<svg style="left:1279.8px;top:16.4px" width="12" height="7" viewBox="0 0 12 7" ><path d="M.4 6.400 L6 .8 L11.600 6.400" fill="none" stroke="#ccc" stroke-width="1.15"/></svg>
<svg style="left:1311.7px;top:15.2px" width="11" height="11" viewBox="0 0 11 11" ><path d="M.5 .5 L10.100 10.300 M10.100 .5 L.5 10.300" fill="none" stroke="#ccc" stroke-width="1.15"/></svg>
</div>
<div class="tx " style="left:13.75px;top:52.5px;font-size:15.6px;line-height:26px;height:26px;font-weight:700;color:#d6d6d6;letter-spacing:-0.099px;">Results</div>
<div class="tx " style="left:100.45px;top:52.5px;font-size:15.6px;line-height:26px;height:26px;color:#d6d6d6;letter-spacing:0.203px;">Messages</div>
<div class="a" style="left:14px;top:88px;width:57px;height:3.6px;border-radius:2px;background:#0f7bd7"></div>
<div class="tx " style="left:1157.8999999999999px;top:52.5px;font-size:15.6px;line-height:26px;height:26px;font-weight:700;color:#d6d6d6;letter-spacing:0.104px;">Open in New Tab</div>
<svg style="left:1296.2px;top:57px" width="18" height="18.3" viewBox="0 0 18 18.3" ><path d="M7.5 .8 H4.3 Q.8 .8 .8 4.300 V13.900 Q.8 17.400 4.300 17.400 H13.700 Q17.200 17.400 17.200 13.900 V10.300" fill="none" stroke="#cfcfcf" stroke-width="1.5"/><path d="M10.500 .8 H17.300 V7.600 M17.300 .8 L10.300 7.700" fill="none" stroke="#cfcfcf" stroke-width="1.5"/></svg>
<div class="a" style="left:0;top:92px;width:637px;height:178px">
<div class="a" style="left:0;top:0;width:637.2px;height:31px;background:#272727"></div>
<div class="td mono" style="left:41.30px;top:-1.8px;color:#e4e4e4">AuthorID</div>
<svg style="left:132.0px;top:7.1px" width="17" height="16" viewBox="0 0 17 16" ><path d="M4.3 15 V1.4 M.4 5.4 L4.3 1.4 L8.2 5.4 M12.8 1.8 V15.5 M8.8 11.5 L12.8 15.5 L16.8 11.5" fill="none" stroke="#fff" stroke-width="1.45"/></svg>
<svg style="left:153.0px;top:6.8px" width="19.3" height="17.5" viewBox="0 0 19.3 17.5" ><path d="M1.2 .8 H18.1 L11.6 8.8 V16.6 H7.7 V8.8 Z" fill="none" stroke="#fff" stroke-width="1.5" stroke-linejoin="round"/></svg>
<div class="td mono" style="left:184.90px;top:-1.8px;color:#e4e4e4">FirstName</div>
<svg style="left:283.9px;top:7.1px" width="17" height="16" viewBox="0 0 17 16" ><path d="M4.3 15 V1.4 M.4 5.4 L4.3 1.4 L8.2 5.4 M12.8 1.8 V15.5 M8.8 11.5 L12.8 15.5 L16.8 11.5" fill="none" stroke="#fff" stroke-width="1.45"/></svg>
<svg style="left:304.9px;top:6.8px" width="19.3" height="17.5" viewBox="0 0 19.3 17.5" ><path d="M1.2 .8 H18.1 L11.6 8.8 V16.6 H7.7 V8.8 Z" fill="none" stroke="#fff" stroke-width="1.5" stroke-linejoin="round"/></svg>
<div class="td mono" style="left:336.70px;top:-1.8px;color:#e4e4e4">MiddleName</div>
<svg style="left:444.9px;top:7.1px" width="17" height="16" viewBox="0 0 17 16" ><path d="M4.3 15 V1.4 M.4 5.4 L4.3 1.4 L8.2 5.4 M12.8 1.8 V15.5 M8.8 11.5 L12.8 15.5 L16.8 11.5" fill="none" stroke="#fff" stroke-width="1.45"/></svg>
<svg style="left:465.9px;top:6.8px" width="19.3" height="17.5" viewBox="0 0 19.3 17.5" ><path d="M1.2 .8 H18.1 L11.6 8.8 V16.6 H7.7 V8.8 Z" fill="none" stroke="#fff" stroke-width="1.5" stroke-linejoin="round"/></svg>
<div class="td mono" style="left:497.20px;top:-1.8px;color:#e4e4e4">LastName</div>
<svg style="left:588.9px;top:7.1px" width="17" height="16" viewBox="0 0 17 16" ><path d="M4.3 15 V1.4 M.4 5.4 L4.3 1.4 L8.2 5.4 M12.8 1.8 V15.5 M8.8 11.5 L12.8 15.5 L16.8 11.5" fill="none" stroke="#fff" stroke-width="1.45"/></svg>
<svg style="left:609.9px;top:6.8px" width="19.3" height="17.5" viewBox="0 0 19.3 17.5" ><path d="M1.2 .8 H18.1 L11.6 8.8 V16.6 H7.7 V8.8 Z" fill="none" stroke="#fff" stroke-width="1.5" stroke-linejoin="round"/></svg>
<div class="a" style="left:33.8px;top:0;width:1px;height:32px;background:#c2c2c2"></div><div class="a" style="left:34.8px;top:0;width:1px;height:32px;background:#6a6a6a"></div>
<div class="a" style="left:178.8px;top:0;width:1px;height:32px;background:#c2c2c2"></div><div class="a" style="left:179.8px;top:0;width:1px;height:32px;background:#6a6a6a"></div>
<div class="a" style="left:330.7px;top:0;width:1px;height:32px;background:#c2c2c2"></div><div class="a" style="left:331.7px;top:0;width:1px;height:32px;background:#6a6a6a"></div>
<div class="a" style="left:491.7px;top:0;width:1px;height:32px;background:#c2c2c2"></div><div class="a" style="left:492.7px;top:0;width:1px;height:32px;background:#6a6a6a"></div>
<div class="a" style="left:635.7px;top:0;width:1px;height:32px;background:#c2c2c2"></div><div class="a" style="left:636.7px;top:0;width:1px;height:32px;background:#6a6a6a"></div>
<div class="a" style="left:0;top:30.6px;width:637.2px;height:2.4px;background:#c4c4c4"></div>
<div class="td mono" style="left:1.7px;top:30.9px">1</div>
<div class="td mono" style="left:38.0px;top:30.9px">1</div>
<div class="td mono" style="left:182.5px;top:30.9px">John</div>
<div class="td mono" style="left:334.5px;top:30.9px">A.</div>
<div class="td mono" style="left:495.7px;top:30.9px">Doe</div>
<div class="hl" style="top:61px;width:637.2px"></div>
<div class="td mono" style="left:1.7px;top:59.8px">2</div>
<div class="td mono" style="left:38.0px;top:59.8px">2</div>
<div class="td mono" style="left:182.5px;top:59.8px">Jane</div>
<div class="td mono" style="left:334.5px;top:59.8px">B.</div>
<div class="td mono" style="left:495.7px;top:59.8px">Smith</div>
<div class="hl" style="top:90px;width:637.2px"></div>
<div class="td mono" style="left:1.7px;top:88.7px">3</div>
<div class="td mono" style="left:38.0px;top:88.7px">3</div>
<div class="td mono" style="left:182.5px;top:88.7px">Emily</div>
<div class="td mono" style="left:334.5px;top:88.7px">C.</div>
<div class="td mono" style="left:495.7px;top:88.7px">Johnson</div>
<div class="hl" style="top:119px;width:637.2px"></div>
<div class="td mono" style="left:1.7px;top:117.6px">4</div>
<div class="td mono" style="left:38.0px;top:117.6px">4</div>
<div class="td mono" style="left:182.5px;top:117.6px">Michael</div>
<div class="td mono" style="left:334.5px;top:117.6px">D.</div>
<div class="td mono" style="left:495.7px;top:117.6px">Brown</div>
<div class="hl" style="top:147px;width:637.2px"></div>
<div class="td mono" style="left:1.7px;top:146.5px">5</div>
<div class="td mono" style="left:38.0px;top:146.5px">5</div>
<div class="td mono" style="left:182.5px;top:146.5px">Sarah</div>
<div class="td mono" style="left:334.5px;top:146.5px">E.</div>
<div class="td mono" style="left:495.7px;top:146.5px">Davis</div>
<div class="hl" style="top:176px;width:637.2px"></div>
<div class="vd" style="left:34.3px;top:33px;height:144px"></div>
<div class="vd" style="left:179.3px;top:33px;height:144px"></div>
<div class="vd" style="left:331.2px;top:33px;height:144px"></div>
<div class="vd" style="left:492.2px;top:33px;height:144px"></div>
<div class="vd" style="left:636.2px;top:33px;height:144px"></div>
</div>
<svg style="left:1310.5px;top:102px" width="18" height="16" viewBox="0 0 18 16" ><path d="M.4 3.7 H8 M5.2 .6 L8.5 3.7 L5.2 6.8" fill="none" stroke="#5bb5f8" stroke-width="1.9"/><path d="M3.8 8.6 V15 H15.2 V5.6 L11.4 1.9 H9.6" fill="none" stroke="#cdcdcd" stroke-width="1.4"/><path d="M11.2 2 V5.8 H15" fill="none" stroke="#cdcdcd" stroke-width="1.1"/><path d="M7.9 8 V15 M11.9 6.4 V15" stroke="#cdcdcd" stroke-width="1.4"/></svg>
<svg style="left:1310.5px;top:140px" width="18" height="17" viewBox="0 0 18 17" ><path d="M.4 3.7 H8 M5.2 .6 L8.5 3.7 L5.2 6.8" fill="none" stroke="#5bb5f8" stroke-width="1.9"/></svg>
<div class="tx " style="left:1312.4px;top:138.79999999999995px;font-size:15px;line-height:22px;height:22px;font-weight:700;color:#cdcdcd;">{</div>
<div class="tx " style="left:1323.2px;top:138.79999999999995px;font-size:15px;line-height:22px;height:22px;font-weight:700;color:#cdcdcd;">}</div>
<svg style="left:1310.5px;top:178px" width="19" height="17" viewBox="0 0 19 17" ><path d="M.4 3.7 H8 M5.2 .6 L8.5 3.7 L5.2 6.8" fill="none" stroke="#5bb5f8" stroke-width="1.9"/><path d="M9.4 1.6 H11.4 L15 5.2 V6.4" fill="none" stroke="#cdcdcd" stroke-width="1.3"/><path d="M11.3 1.6 V5.3 H15 Z" fill="#cdcdcd"/><path d="M3.9 8.2 V14.7 H7.6" fill="none" stroke="#cdcdcd" stroke-width="1.5"/><rect x="9.4" y="7.6" width="8.9" height="7.9" fill="#cdcdcd"/><path d="M9.4 11.4 H18.3 M12.4 8.6 V15.5 M15.3 8.6 V15.5" stroke="#1f1f1f" stroke-width=".9"/></svg>
</div>
<div id="status">
<div class="a" style="left:0;top:0;width:41px;height:25px;background:#0078d4"></div><div class="a" style="left:0;top:-1px;width:41px;height:1px;background:#0c4a7c"></div>
<svg style="left:14.5px;top:4px" width="12" height="15" viewBox="0 0 12 15" ><path d="M.6 3.8 L5 8.2 L.6 12.6 M10.6 .6 L6.2 5 L10.6 9.4" fill="none" stroke="#fff" stroke-width="1.2"/></svg>
<svg style="left:51.7px;top:4.7px" width="15" height="15" viewBox="0 0 15 15" ><circle cx="7.2" cy="7.2" r="6.5" fill="none" stroke="#ccc" stroke-width="1.15"/><path d="M4.6 4.6 L9.8 9.8 M9.8 4.6 L4.6 9.8" stroke="#ccc" stroke-width="1.15"/></svg>
<div class="tx " style="left:71.3px;top:0px;font-size:14.4px;line-height:25px;height:25px;">0</div>
<svg style="left:85.6px;top:5px" width="15" height="14" viewBox="0 0 15 14" ><path d="M7.2 .9 L13.9 13.2 H.5 Z" fill="none" stroke="#ccc" stroke-width="1.15" stroke-linejoin="round"/><path d="M7.2 5 V9.4 M7.2 10.6 V12" stroke="#ccc" stroke-width="1.2"/></svg>
<div class="tx " style="left:105px;top:0px;font-size:14.4px;line-height:25px;height:25px;">0</div>
<div class="a" style="left:778px;top:0;width:40px;height:25px;background:#37393d"></div>
<svg style="left:790.5px;top:5px" width="15" height="15" viewBox="0 0 15 15" ><circle cx="5.8" cy="5.8" r="5" fill="none" stroke="#ccc" stroke-width="1.15"/><path d="M9.4 9.4 L14 14 M3.4 5.8 H8.2 M5.8 3.4 V8.2" stroke="#ccc" stroke-width="1.15" fill="none"/></svg>
<div class="tx " style="left:828px;top:0px;font-size:14.4px;line-height:25px;height:25px;letter-spacing:0.372px;">Ln 5, Col 33</div>
<div class="tx " style="left:929.6px;top:0px;font-size:14.4px;line-height:25px;height:25px;letter-spacing:0.338px;">Spaces: 4</div>
<div class="tx " style="left:1015.6px;top:0px;font-size:14.4px;line-height:25px;height:25px;letter-spacing:0.63px;">UTF-8</div>
<div class="tx " style="left:1078.6px;top:0px;font-size:14.4px;line-height:25px;height:25px;letter-spacing:-0.631px;">CRLF</div>
<div class="tx " style="left:1136px;top:0px;font-size:14.4px;line-height:25px;height:25px;letter-spacing:3.875px;font-size:13px;">{}</div>
<div class="tx " style="left:1158.4px;top:0px;font-size:14.4px;line-height:25px;height:25px;letter-spacing:-0.898px;">SQL</div>
<svg style="left:1205.5px;top:5px" width="17" height="15" viewBox="0 0 17 15" ><path d="M2.6 6 C2.6 2.6 4.3 1.3 6.4 1.3 C7.7 1.3 8.5 2 8.5 3 C8.5 2 9.3 1.3 10.6 1.3 C12.7 1.3 14.4 2.6 14.4 6 C15.7 6.9 16.5 8.1 16.5 9.4 C16.5 12 12.7 14 8.5 14 C4.3 14 .5 12 .5 9.4 C.5 8.1 1.3 6.9 2.6 6 Z" fill="#ccc"/><ellipse cx="5.6" cy="4.6" rx="1.9" ry="2.1" fill="#181818"/><ellipse cx="11.4" cy="4.6" rx="1.9" ry="2.1" fill="#181818"/><path d="M3 8.2 C4.7 7.4 6.8 7.9 8.5 7.2 C10.2 7.9 12.3 7.4 14 8.2 V10.7 C12.3 12 10.2 12.4 8.5 12.4 C6.8 12.4 4.7 12 3 10.7 Z" fill="#181818"/><rect x="5.8" y="8.8" width="1.4" height="2.5" rx=".5" fill="#ccc"/><rect x="9.8" y="8.8" width="1.4" height="2.5" rx=".5" fill="#ccc"/></svg>
<div class="tx " style="left:1242px;top:0px;font-size:14.4px;line-height:25px;height:25px;letter-spacing:-0.348px;">MSSQL</div>
<div class="tx " style="left:1311.4px;top:0px;font-size:14.4px;line-height:25px;height:25px;letter-spacing:0.21px;">SQLCMD: Off</div>
<div class="tx " style="left:1421.6px;top:0px;font-size:14.4px;line-height:25px;height:25px;letter-spacing:0.569px;">5 rows affected</div>
<div class="tx " style="left:1546.8px;top:0px;font-size:14.4px;line-height:25px;height:25px;letter-spacing:0.824px;">00:00:00.071</div>
<div class="tx " style="left:1660.4px;top:0px;font-size:14.4px;line-height:25px;height:25px;letter-spacing:0.472px;">localhost,1434 : Library : sa</div>
<svg style="left:1871px;top:5px" width="14" height="15" viewBox="0 0 14 15" ><path d="M7 1 C4.2 1 2.6 3.2 2.6 5.8 V9.2 L1 11.6 H13 L11.4 9.2 V5.8 C11.4 3.2 9.8 1 7 1 Z" fill="none" stroke="#ccc" stroke-width="1.15" stroke-linejoin="round"/><path d="M5.4 12.8 C5.6 14.4 8.4 14.4 8.6 12.8" fill="none" stroke="#ccc" stroke-width="1.15"/></svg>
</div>
<svg style="left:0;top:0;pointer-events:none" width="1904" height="1039" viewBox="0 0 1904 1039"><rect x="1670.9" y="41.1" width="162" height="42.1" fill="none" stroke="#ff2600" stroke-width="3.8"/><rect x="557.1" y="518.1" width="1338.700" height="239.600" fill="none" stroke="#ff2600" stroke-width="3.8"/></svg>
</div>
</body>
</html>
